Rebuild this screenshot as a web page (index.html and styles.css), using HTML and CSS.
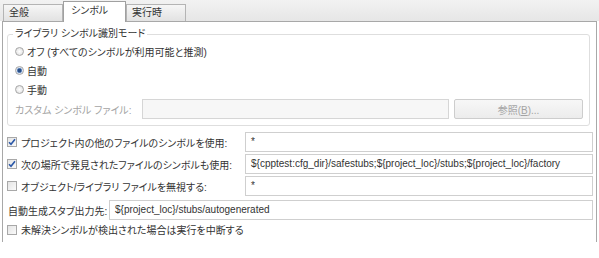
FILE: index.html
```html
<!DOCTYPE html>
<html>
<head>
  <meta charset="utf-8">
  <title>シンボル</title>
  <link rel="stylesheet" href="styles.css">
</head>
<body>
  <div class="tabs">
    <div class="tab">全般</div>
    <div class="tab active">シンボル</div>
    <div class="tab">実行時</div>
  </div>

  <div class="panel">
    <fieldset class="group">
      <legend>ライブラリ シンボル識別モード</legend>
      <div class="option"><span class="radio"></span>オフ (すべてのシンボルが利用可能と推測)</div>
      <div class="option"><span class="radio checked"></span>自動</div>
      <div class="option"><span class="radio"></span>手動</div>
      <div class="file-row">
        <span class="file-label">カスタム シンボル ファイル:</span>
        <div class="field disabled"></div>
        <button class="browse" disabled>参照(<u>B</u>)...</button>
      </div>
    </fieldset>

    <div class="row">
      <label class="row-label"><span class="check checked"><svg viewBox="0 0 8 8"><path d="M1 4.2 L3 6.3 L7 1.2"/></svg></span>プロジェクト内の他のファイルのシンボルを使用:</label>
      <div class="field">*</div>
    </div>
    <div class="row">
      <label class="row-label"><span class="check checked"><svg viewBox="0 0 8 8"><path d="M1 4.2 L3 6.3 L7 1.2"/></svg></span>次の場所で発見されたファイルのシンボルも使用:</label>
      <div class="field">${cpptest:cfg_dir}/safestubs;${project_loc}/stubs;${project_loc}/factory</div>
    </div>
    <div class="row">
      <label class="row-label"><span class="check"></span>オブジェクト/ライブラリ ファイルを無視する:</label>
      <div class="field">*</div>
    </div>
    <div class="row stub-row">
      <label class="stub-label">自動生成スタブ出力先:</label>
      <div class="field">${project_loc}/stubs/autogenerated</div>
    </div>
    <div class="row last">
      <label class="row-label wide"><span class="check"></span>未解決シンボルが検出された場合は実行を中断する</label>
    </div>
  </div>
</body>
</html>
```

FILE: styles.css
```css
body {
  margin: 0;
  width: 599px;
  height: 258px;
  background-color: white;
  font-family: 'Liberation Sans', 'Noto Sans CJK JP', sans-serif;
  font-size: 10px;
  font-feature-settings: "palt";
  color: #333;
}
.tabs {
  display: flex;
  align-items: flex-end;
  height: 21px;
  padding-left: 3px;
  background: linear-gradient(#f2f2f2, #e6e6e6);
}
.tab {
  box-sizing: border-box;
  width: 60px;
  height: 17px;
  padding-left: 5px;
  line-height: 15px;
  border: 1px solid #b4b4b4;
  border-bottom: none;
  background: linear-gradient(#f6f6f6, #e2e2e2);
}
.tab.active {
  width: 63px;
  height: 21px;
  margin-bottom: -1px;
  padding-left: 7px;
  line-height: 17px;
  border-color: #a0a0a0;
  background: white;
  position: relative;
}
.panel {
  box-sizing: border-box;
  width: 595px;
  height: 221px;
  margin-left: 2px;
  padding: 5px 3px 0 4px;
  border: 1px solid #a8a8a8;
  border-bottom: none;
}
.group {
  margin: 0 3px 0 0;
  padding: 1px 6px 6px 7px;
  border: 1px solid #dedede;
  border-radius: 3px;
}
.group legend {
  padding: 0 2px;
  margin-left: -2px;
  line-height: 14px;
}
.option {
  display: flex;
  align-items: center;
  height: 19px;
}
.radio {
  box-sizing: border-box;
  width: 9px;
  height: 9px;
  margin-right: 3px;
  border: 1px solid #a6a6a6;
  border-radius: 50%;
  background: radial-gradient(#ffffff, #dcdcdc);
}
.radio.checked {
  background: radial-gradient(#2a4f86 30%, #6b8fc4 45%, #dfe6f0 60%);
}
.file-row {
  display: flex;
  align-items: center;
  height: 20px;
}
.file-label {
  width: 127px;
  color: #a4a4a4;
  white-space: nowrap;
}
.field {
  box-sizing: border-box;
  flex: 1;
  height: 20px;
  padding-left: 5px;
  line-height: 18px;
  border: 1px solid #cfcfcf;
  background: white;
  white-space: nowrap;
  overflow: hidden;
}
.field.disabled {
  background: #f7f7f7;
  border-color: #d6d6d6;
}
.browse {
  box-sizing: border-box;
  width: 129px;
  height: 20px;
  margin-left: 5px;
  padding: 0;
  border: 1px solid #cdcdcd;
  border-radius: 2px;
  background: linear-gradient(#f7f7f7, #ececec);
  font-family: inherit;
  font-size: inherit;
  color: #a4a4a4;
}
.row {
  display: flex;
  align-items: center;
  height: 20px;
  margin-top: 2px;
}
.group + .row {
  margin-top: 6px;
}
.row.stub-row {
  margin-top: 4px;
}
.row.last {
  height: 17px;
  margin-top: 1px;
}
.row-label {
  display: flex;
  align-items: center;
  width: 238px;
  flex-shrink: 0;
  white-space: nowrap;
}
.row-label.wide {
  width: auto;
}
.stub-label {
  width: 101px;
  flex-shrink: 0;
  padding-left: 1px;
  white-space: nowrap;
}
.check {
  box-sizing: border-box;
  display: flex;
  width: 10px;
  height: 10px;
  margin-right: 4px;
  border: 1px solid #a8a8a8;
  background: linear-gradient(135deg, #e4e4e4, #fafafa);
}
.check svg {
  width: 8px;
  height: 8px;
  fill: none;
  stroke: #2b58a8;
  stroke-width: 1.6;
}
```
